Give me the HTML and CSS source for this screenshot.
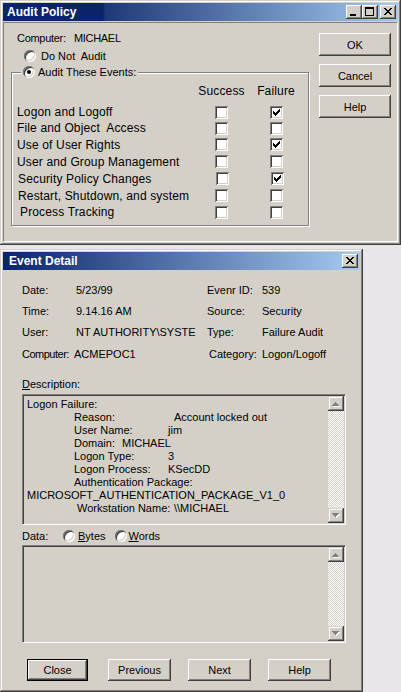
FILE: index.html
```html
<!DOCTYPE html>
<html>
<head>
<meta charset="utf-8">
<title>Audit Policy</title>
<link rel="stylesheet" href="styles.css">
</head>
<body>
<div class="win win-audit">
  <div class="titlebar titlebar-audit">
    <span class="title">Audit Policy</span>
    <div class="caps">
      <span class="cap"><svg width="16" height="14" viewBox="0 0 16 14" shape-rendering="crispEdges"><path d="M4 9h6v2H4z" fill="#000"/></svg></span>
      <span class="cap"><svg width="16" height="14" viewBox="0 0 16 14" shape-rendering="crispEdges"><path d="M3 2h9v2H3zM3 4h1v7H3zM11 4h1v7h-1zM3 10h9v1H3z" fill="#000"/></svg></span>
      <span class="cap cap-gap"><svg width="16" height="14" viewBox="0 0 16 14" shape-rendering="crispEdges"><path d="M4 3h2v1H4zM10 3h2v1h-2zM5 4h2v1H5zM9 4h2v1H9zM6 5h4v1H6zM7 6h2v1H7zM6 7h4v1H6zM5 8h2v1H5zM9 8h2v1H9zM4 9h2v1H4zM10 9h2v1h-2z" fill="#000"/></svg></span>
    </div>
  </div>
  <div class="panel">
    <div class="audit-left">
      <div class="computer">Computer:&nbsp;&nbsp; MICHAEL</div>
      <div class="radio-row"><span class="radio"></span><span>Do Not&nbsp; Audit</span></div>
      <fieldset class="group">
        <legend class="legend"><span class="radio on"></span><span>Audit These Events:</span></legend>
        <div class="ev-grid">
          <span></span><span class="hdr">Success</span><span class="hdr">Failure</span>

          <span class="lbl">Logon and Logoff</span>
          <span class="cb"></span>
          <span class="cb"><svg width="13" height="13" viewBox="0 0 13 13" shape-rendering="crispEdges"><path d="M3 5h1v3H3zM4 6h1v3H4zM5 7h1v3H5zM6 6h1v3H6zM7 5h1v3H7zM8 4h1v3H8zM9 3h1v3H9z" fill="#000"/></svg></span>

          <span class="lbl">File and Object&nbsp; Access</span>
          <span class="cb"></span>
          <span class="cb"></span>

          <span class="lbl">Use of User Rights</span>
          <span class="cb"></span>
          <span class="cb"><svg width="13" height="13" viewBox="0 0 13 13" shape-rendering="crispEdges"><path d="M3 5h1v3H3zM4 6h1v3H4zM5 7h1v3H5zM6 6h1v3H6zM7 5h1v3H7zM8 4h1v3H8zM9 3h1v3H9z" fill="#000"/></svg></span>

          <span class="lbl">User and Group Management</span>
          <span class="cb"></span>
          <span class="cb"></span>

          <span class="lbl lbl-s1">Security Policy Changes</span>
          <span class="cb cb-s1"></span>
          <span class="cb cb-s1"><svg width="13" height="13" viewBox="0 0 13 13" shape-rendering="crispEdges"><path d="M3 5h1v3H3zM4 6h1v3H4zM5 7h1v3H5zM6 6h1v3H6zM7 5h1v3H7zM8 4h1v3H8zM9 3h1v3H9z" fill="#000"/></svg></span>

          <span class="lbl lbl-s1">Restart, Shutdown, and system</span>
          <span class="cb"></span>
          <span class="cb"></span>

          <span class="lbl lbl-s3">Process Tracking</span>
          <span class="cb"></span>
          <span class="cb"></span>
        </div>
      </fieldset>
    </div>
    <div class="btn-col">
      <button class="btn btn-side">OK</button>
      <button class="btn btn-side">Cancel</button>
      <button class="btn btn-side">Help</button>
    </div>
  </div>
</div>

<div class="win win-event">
  <div class="titlebar titlebar-event">
    <span class="title">Event Detail</span>
    <div class="caps">
      <span class="cap"><svg width="16" height="14" viewBox="0 0 16 14" shape-rendering="crispEdges"><path d="M4 3h2v1H4zM10 3h2v1h-2zM5 4h2v1H5zM9 4h2v1H9zM6 5h4v1H6zM7 6h2v1H7zM6 7h4v1H6zM5 8h2v1H5zM9 8h2v1H9zM4 9h2v1H4zM10 9h2v1h-2z" fill="#000"/></svg></span>
    </div>
  </div>
  <div class="event-body">
    <div class="fields">
      <span>Date:</span><span>5/23/99</span><span>Evenr ID:</span><span>539</span>
      <span>Time:</span><span>9.14.16 AM</span><span>Source:</span><span>Security</span>
      <span>User:</span><span>NT AUTHORITY\SYSTE</span><span>Type:</span><span>Failure Audit</span>
      <span class="f-tight">Computer:</span><span class="f-shift">ACMEPOC1</span><span class="f-shift2">Category:</span><span>Logon/Logoff</span>
    </div>

    <div class="desc-label"><u>D</u>escription:</div>
    <div class="box box-desc">
      <div class="box-text">
        <div class="dl">Logon Failure:</div>
        <div class="dl ind"><span class="k k100">Reason:</span>Account locked out</div>
        <div class="dl ind"><span class="k k94">User Name:</span>jim</div>
        <div class="dl ind"><span class="k k48">Domain:</span>MICHAEL</div>
        <div class="dl ind"><span class="k k94">Logon Type:</span>3</div>
        <div class="dl ind"><span class="k k94">Logon Process:</span>KSecDD</div>
        <div class="dl ind">Authentication Package:</div>
        <div class="dl">MICROSOFT_AUTHENTICATION_PACKAGE_V1_0</div>
        <div class="dl ind2"><span class="k k97">Workstation Name:</span>\\MICHAEL</div>
      </div>
      <div class="sbar">
        <span class="sbtn"><svg width="16" height="15" viewBox="0 0 16 15" shape-rendering="crispEdges"><path d="M8 7h1v1H8zM7 8h3v1H7zM6 9h5v1H6zM5 10h7v1H5z" fill="#fff"/><path d="M7 6h1v1H7zM6 7h3v1H6zM5 8h5v1H5zM4 9h7v1H4z" fill="#808080"/></svg></span>
        <span class="strack"></span>
        <span class="sbtn"><svg width="16" height="15" viewBox="0 0 16 15" shape-rendering="crispEdges"><path d="M5 6h7v1H5zM6 7h5v1H6zM7 8h3v1H7zM8 9h1v1H8z" fill="#fff"/><path d="M4 5h7v1H4zM5 6h5v1H5zM6 7h3v1H6zM7 8h1v1H7z" fill="#808080"/></svg></span>
      </div>
    </div>

    <div class="data-row">
      <span class="data-label">Data:</span>
      <span class="ropt"><span class="radio"></span><span><u>B</u>ytes</span></span>
      <span class="ropt ropt2"><span class="radio"></span><span><u>W</u>ords</span></span>
    </div>
    <div class="box box-data">
      <div class="box-text"></div>
      <div class="sbar">
        <span class="sbtn"><svg width="16" height="15" viewBox="0 0 16 15" shape-rendering="crispEdges"><path d="M8 7h1v1H8zM7 8h3v1H7zM6 9h5v1H6zM5 10h7v1H5z" fill="#fff"/><path d="M7 6h1v1H7zM6 7h3v1H6zM5 8h5v1H5zM4 9h7v1H4z" fill="#808080"/></svg></span>
        <span class="strack"></span>
        <span class="sbtn"><svg width="16" height="15" viewBox="0 0 16 15" shape-rendering="crispEdges"><path d="M5 6h7v1H5zM6 7h5v1H6zM7 8h3v1H7zM8 9h1v1H8z" fill="#fff"/><path d="M4 5h7v1H4zM5 6h5v1H5zM6 7h3v1H6zM7 8h1v1H7z" fill="#808080"/></svg></span>
      </div>
    </div>

    <div class="btn-row">
      <button class="btn btn-bottom btn-default">Close</button>
      <button class="btn btn-bottom">Previous</button>
      <button class="btn btn-bottom">Next</button>
      <button class="btn btn-bottom">Help</button>
    </div>
  </div>
</div>
</body>
</html>
```

FILE: styles.css
```css
* { box-sizing: border-box; }
html, body { margin: 0; padding: 0; }
body {
  width: 401px;
  height: 692px;
  overflow: hidden;
  background: #e9e5e8;
  font-family: "Liberation Sans", Arial, sans-serif;
  font-size: 11px;
  color: #000;
}

/* windows */
.win {
  background: #d4d0c8;
  padding: 3px;
  display: flex;
  flex-direction: column;
  box-shadow: inset -1px -1px 0 #404040, inset 1px 1px 0 #d4d0c8,
              inset -2px -2px 0 #808080, inset 2px 2px 0 #fff;
}
.win-audit { width: 401px; height: 245px; }
.win-event { width: 363px; height: 443px; margin-top: 4px; }

.titlebar {
  height: 18px;
  flex: none;
  display: flex;
  align-items: center;
  color: #fff;
  font-weight: bold;
  font-size: 12px;
  padding: 0 2px 0 4px;
}
.titlebar-audit {
  background: linear-gradient(90deg, #0a246a 0, #0a246a 100px, #1d3877 102px, #a6caf0 100%);
}
.titlebar-event {
  padding-left: 6px;
  background: linear-gradient(90deg, #0a246a 0, #a6caf0 100%);
}
.title { white-space: nowrap; }
.caps { margin-left: auto; display: flex; }
.cap {
  width: 16px;
  height: 14px;
  background: #d4d0c8;
  display: block;
  box-shadow: inset -1px -1px 0 #404040, inset 1px 1px 0 #fff,
              inset -2px -2px 0 #808080, inset 2px 2px 0 #d4d0c8;
}
.cap svg { display: block; }
.cap-gap { margin-left: 2px; }

/* audit policy panel */
.panel {
  margin-top: 1px;
  flex: 1;
  display: flex;
  border: 1px solid;
  border-color: #808080 #fff #fff #808080;
}
.audit-left {
  width: 305px;
  padding: 8px 0 0 7px;
}
.computer {
  margin-left: 6px;
  line-height: 14px;
  letter-spacing: -0.3px;
  white-space: pre;
}
.radio-row {
  margin: 4px 0 0 13px;
  height: 14px;
  display: flex;
  align-items: center;
  gap: 5px;
}
.radio {
  width: 12px;
  height: 12px;
  border-radius: 50%;
  background: #fff;
  position: relative;
  flex: none;
  box-shadow: inset 1px 1px 0 #808080, inset -1px -1px 0 #fff,
              inset 2px 2px 0 #404040, inset -2px -2px 0 #d4d0c8;
}
.radio.on::after {
  content: "";
  position: absolute;
  left: 4px;
  top: 4px;
  width: 4px;
  height: 4px;
  border-radius: 50%;
  background: #000;
}

.group {
  margin: 2px 0 0 0;
  padding: 5px 0 5px 0;
  width: 298px;
  min-width: 0;
  border: 1px solid #808080;
  box-shadow: 1px 1px 0 #fff, inset 1px 1px 0 #fff;
}
.legend {
  margin-left: 9px;
  padding: 0 2px;
  display: flex;
  align-items: center;
  gap: 3px;
  line-height: 14px;
  height: 14px;
  background: #d4d0c8;
}
.ev-grid {
  display: grid;
  grid-template-columns: 180px 49px 60px;
  grid-template-rows: 20px 16px 16px 17px 17px 17px 17px 16px;
  padding-left: 5px;
  font-size: 12px;
  letter-spacing: 0.15px;
}
.hdr {
  justify-self: center;
  align-self: start;
  line-height: 14px;
}
.lbl {
  align-self: center;
  white-space: nowrap;
  line-height: 16px;
}
.lbl-s1 { padding-left: 1px; }
.lbl-s3 { padding-left: 3px; }
.cb {
  justify-self: center;
  align-self: center;
  width: 13px;
  height: 13px;
  background: #fff;
  box-shadow: inset 1px 1px 0 #808080, inset -1px -1px 0 #fff,
              inset 2px 2px 0 #404040, inset -2px -2px 0 #d4d0c8;
}
.cb svg { display: block; }
.cb-s1 { transform: translateX(1px); }

.btn {
  font-family: "Liberation Sans", Arial, sans-serif;
  font-size: 11px;
  color: #000;
  background: #d4d0c8;
  border: none;
  padding: 0;
  margin: 0;
  box-shadow: inset -1px -1px 0 #404040, inset 1px 1px 0 #fff,
              inset -2px -2px 0 #808080, inset 2px 2px 0 #d4d0c8;
}
.btn-col {
  margin-left: 10px;
  padding-top: 10px;
  display: flex;
  flex-direction: column;
  gap: 8px;
}
.btn-side { width: 72px; height: 23px; }

/* event detail */
.event-body {
  padding-left: 19px;
  display: flex;
  flex-direction: column;
}
.fields {
  margin-top: 10px;
  display: grid;
  grid-template-columns: 54px 131px 55px auto;
  grid-template-rows: 21px 21px 22px 21px;
  line-height: 21px;
  white-space: nowrap;
}
.f-tight { letter-spacing: -0.5px; }
.f-shift { margin-left: -2px; }
.f-shift2 { margin-left: 2px; }
.desc-label {
  margin-top: 12px;
  line-height: 14px;
}
.box {
  width: 324px;
  display: flex;
  border: 1px solid;
  border-color: #808080 #fff #fff #808080;
  padding: 1px;
  box-shadow: inset 1px 1px 0 #404040, inset -1px -1px 0 #d4d0c8;
}
.box-desc { margin-top: 3px; height: 131px; }
.box-data { margin-top: 2px; height: 98px; }
.box-text {
  flex: 1;
  padding: 2px 0 0 3px;
  line-height: 13px;
  white-space: nowrap;
}
.dl { height: 13px; }
.ind { padding-left: 47px; }
.ind2 { padding-left: 50px; }
.k { display: inline-block; }
.k100 { width: 100px; }
.k94 { width: 94px; }
.k48 { width: 48px; }
.k97 { width: 97px; }

.sbar {
  width: 16px;
  flex: none;
  display: flex;
  flex-direction: column;
}
.sbtn {
  height: 15px;
  flex: none;
  background: #d4d0c8;
  box-shadow: inset -1px -1px 0 #404040, inset 1px 1px 0 #d4d0c8,
              inset -2px -2px 0 #808080, inset 2px 2px 0 #fff;
}
.sbtn svg { display: block; }
.strack {
  flex: 1;
  background: repeating-conic-gradient(#fff 0 25%, #d4d0c8 0 50%) 0 0 / 2px 2px;
}

.data-row {
  margin-top: 4px;
  height: 14px;
  display: flex;
  align-items: center;
}
.data-label { width: 41px; }
.ropt { display: flex; align-items: center; gap: 3px; }
.ropt2 { margin-left: 9px; gap: 2px; }

.btn-row {
  margin-top: 16px;
  padding-left: 5px;
  display: flex;
  gap: 17px;
}
.btn-bottom { width: 63px; height: 22px; }
.btn-default {
  width: 61px;
  margin-right: 3px;
  border: 1px solid #000;
}
```
